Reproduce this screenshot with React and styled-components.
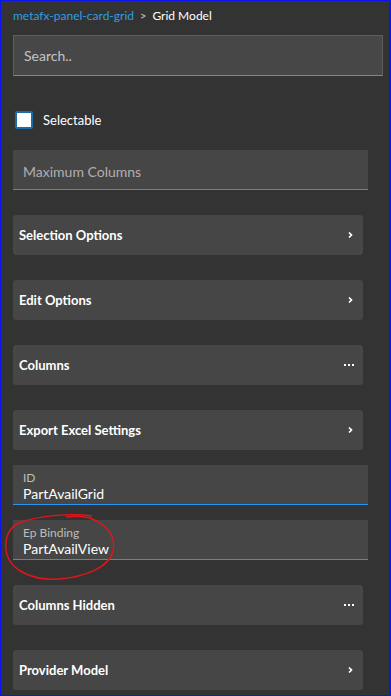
import React from "react";
import styled, { createGlobalStyle } from "styled-components";

const GlobalStyle = createGlobalStyle`
  html, body {
    margin: 0;
    padding: 0;
    background: #333333;
  }
  * {
    box-sizing: border-box;
  }
`;

const Frame = styled.div`
  position: relative;
  width: 391px;
  height: 696px;
  overflow: hidden;
  background: #333333;
  border: 1px solid #0a14f0;
  border-right-width: 2px;
  padding: 0 6px 0 12px;
  font-family: Lato, "Noto Sans", "Liberation Sans", sans-serif;
  color: #ffffff;
`;

const Breadcrumb = styled.div`
  display: flex;
  align-items: center;
  gap: 6px;
  height: 16px;
  margin-top: 6px;
  font-size: 12px;
`;

const Crumb = styled.span`
  color: ${(p) => (p.$link ? "#2d9fe0" : "#ffffff")};
`;

const Sep = styled.span`
  color: #cccccc;
  font-size: 11px;
`;

const SearchBox = styled.div`
  display: flex;
  align-items: center;
  height: 41px;
  margin-top: 12px;
  padding-left: 10px;
  background: #474747;
  border: 1px solid #5e5e5e;
  border-bottom: 1px solid #3a9fd8;
  color: #c4c4c4;
  font-size: 14px;
`;

const CheckRow = styled.label`
  display: flex;
  align-items: center;
  gap: 10px;
  margin: 35px 0 0 2px;
  font-size: 13px;
  color: #ffffff;
`;

const Box = styled.span`
  width: 18px;
  height: 18px;
  background: #ffffff;
  border: 2px solid #1c6aa6;
  border-radius: 2px;
`;

const Field = styled.div`
  display: flex;
  flex-direction: column;
  justify-content: ${(p) => (p.$label ? "flex-start" : "center")};
  width: 355px;
  height: 40px;
  margin-top: ${(p) => p.$top}px;
  padding: ${(p) => (p.$label ? "6px 10px 0" : "3px 10px 0")};
  background: #464646;
  border-bottom: 1px solid #2196f3;
`;

const Placeholder = styled.span`
  font-size: 14px;
  color: #b0b0b0;
`;

const FieldLabel = styled.span`
  font-size: 12px;
  line-height: 14px;
  color: #bdbdbd;
`;

const FieldValue = styled.span`
  font-size: 14px;
  line-height: 18px;
  color: #ffffff;
`;

const Card = styled.div`
  display: flex;
  align-items: center;
  justify-content: space-between;
  width: 350px;
  height: 40px;
  margin-top: ${(p) => p.$top}px;
  padding: 0 9px 0 6px;
  background: #464646;
  border-radius: 3px;
  font-size: 13px;
  font-weight: 700;
  color: #ffffff;
`;

const Mark = styled.svg`
  display: block;
`;

const Annotation = styled.svg`
  position: absolute;
  left: 3px;
  top: 512px;
  pointer-events: none;
`;

function Chevron() {
  return (
    <Mark width="8" height="10" viewBox="0 0 8 10">
      <path d="M3 2.5 L5.5 5 L3 7.5" fill="none" stroke="#fff" strokeWidth="1.7" />
    </Mark>
  );
}

function Dots() {
  return (
    <Mark width="10" height="4" viewBox="0 0 10 4">
      <rect x="0" y="1" width="2" height="2" fill="#fff" />
      <rect x="4" y="1" width="2" height="2" fill="#fff" />
      <rect x="8" y="1" width="2" height="2" fill="#fff" />
    </Mark>
  );
}

const rows = [
  { kind: "card", title: "Selection Options", icon: "chevron", top: 25 },
  { kind: "card", title: "Edit Options", icon: "chevron", top: 25 },
  { kind: "card", title: "Columns", icon: "dots", top: 25 },
  { kind: "card", title: "Export Excel Settings", icon: "chevron", top: 25 },
  { kind: "field", label: "ID", value: "PartAvailGrid", top: 15 },
  { kind: "field", label: "Ep Binding", value: "PartAvailView", top: 15 },
  { kind: "card", title: "Columns Hidden", icon: "dots", top: 25 },
  { kind: "card", title: "Provider Model", icon: "chevron", top: 25 },
];

export default function App() {
  return (
    <Frame>
      <GlobalStyle />
      <Breadcrumb>
        <Crumb $link>metafx-panel-card-grid</Crumb>
        <Sep>&gt;</Sep>
        <Crumb>Grid Model</Crumb>
      </Breadcrumb>
      <SearchBox>Search..</SearchBox>
      <CheckRow>
        <Box />
        Selectable
      </CheckRow>
      <Field $top={21}>
        <Placeholder>Maximum Columns</Placeholder>
      </Field>
      {rows.map((r) =>
        r.kind === "card" ? (
          <Card key={r.title} $top={r.top}>
            {r.title}
            {r.icon === "chevron" ? <Chevron /> : <Dots />}
          </Card>
        ) : (
          <Field key={r.label} $top={r.top} $label>
            <FieldLabel>{r.label}</FieldLabel>
            <FieldValue>{r.value}</FieldValue>
          </Field>
        )
      )}
      <Annotation width="115" height="70" viewBox="0 0 115 70">
        <path
          d="M88 3 C70 0 35 2 15 10 C2 16 0 30 3 42 C8 58 30 68 55 66 C80 64 105 55 109 38 C112 24 104 12 86 5 C80 3 70 3 62 4"
          fill="none"
          stroke="#e0161b"
          strokeWidth="1.4"
        />
      </Annotation>
    </Frame>
  );
}
